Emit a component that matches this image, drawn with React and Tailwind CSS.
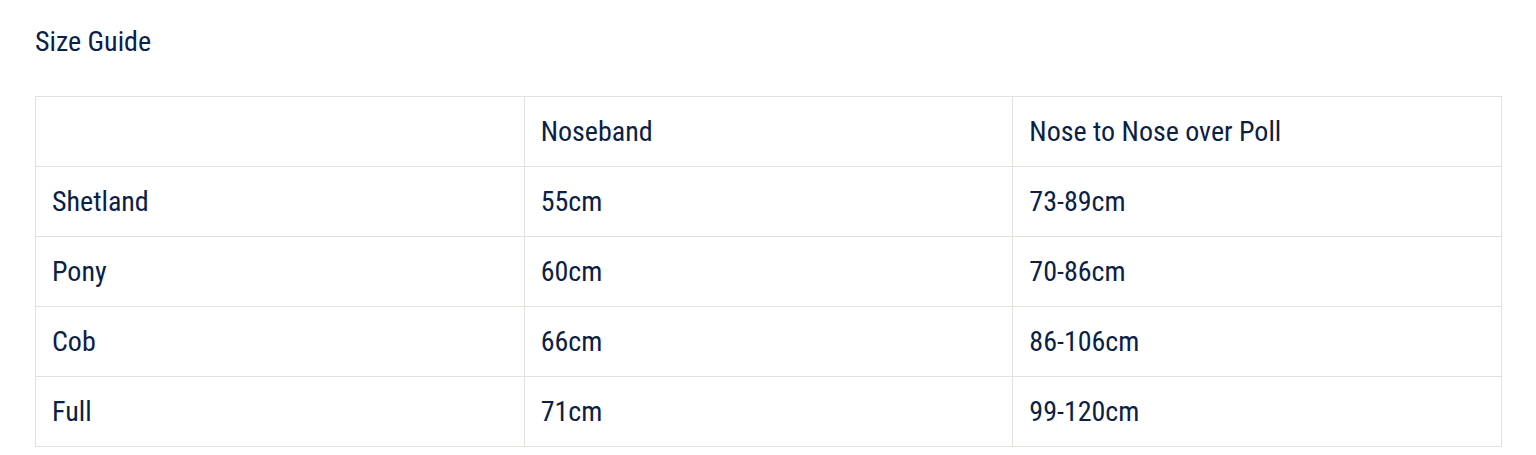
export default function App() {
  const rows = [
    ["Shetland", "55cm", "73-89cm"],
    ["Pony", "60cm", "70-86cm"],
    ["Cob", "66cm", "86-106cm"],
    ["Full", "71cm", "99-120cm"],
  ];
  const font = { fontFamily: "'Roboto Condensed', Roboto, 'Liberation Sans', sans-serif", fontStretch: "condensed" };
  return (
    <div className="bg-white w-[1536px] h-[455px] pl-[35px] pr-[34px] pt-[26px] text-[#0a2145]" style={font}>
      <h2 className="text-[28px] leading-[32px] m-0 font-normal">Size Guide</h2>
      <table className="mt-[38px] w-full border-collapse table-fixed text-[28px]">
        <tbody>
          <tr className="h-[70px]">
            <td className="border border-[#e2e2dd] px-[16px]"></td>
            <td className="border border-[#e2e2dd] px-[16px]">Noseband</td>
            <td className="border border-[#e2e2dd] px-[16px]">Nose to Nose over Poll</td>
          </tr>
          {rows.map((r) => (
            <tr key={r[0]} className="h-[70px]">
              {r.map((c, i) => (
                <td key={i} className="border border-[#e2e2dd] px-[16px]">{c}</td>
              ))}
            </tr>
          ))}
        </tbody>
      </table>
    </div>
  );
}
